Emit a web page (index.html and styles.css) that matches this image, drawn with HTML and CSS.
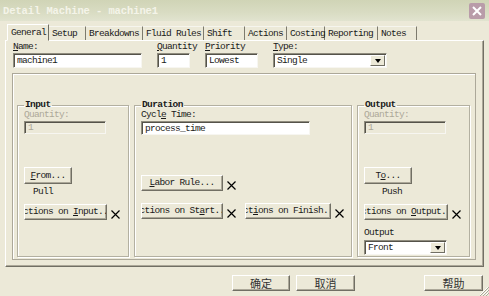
FILE: index.html
```html
<!DOCTYPE html>
<html lang="en">
<head>
    <meta charset="UTF-8">
    <title>Detail Machine - machine1</title>
    <link rel="stylesheet" href="styles.css">
</head>
<body>
    <div class="titlebar">
        <span class="title">Detail Machine - machine1</span>
        <span class="close">
            <svg width="10" height="10" viewBox="0 0 10 10"><path d="M1 1L9 9M9 1L1 9" stroke="#fff" stroke-width="2"/></svg>
        </span>
    </div>

    <ul class="tabs">
        <li class="tab active">General</li>
        <li class="tab">Setup</li>
        <li class="tab">Breakdowns</li>
        <li class="tab">Fluid Rules</li>
        <li class="tab">Shift</li>
        <li class="tab">Actions</li>
        <li class="tab">Costing</li>
        <li class="tab">Reporting</li>
        <li class="tab">Notes</li>
    </ul>

    <div class="panel">
        <div class="fields">
            <div class="field f-name">
                <span class="lbl"><u>N</u>ame:</span>
                <div class="edit">machine1</div>
            </div>
            <div class="field f-qty">
                <span class="lbl"><u>Q</u>uantity</span>
                <div class="edit">1</div>
            </div>
            <div class="field f-pri">
                <span class="lbl"><u>P</u>riority</span>
                <div class="edit">Lowest</div>
            </div>
            <div class="field f-type">
                <span class="lbl"><u>T</u>ype:</span>
                <div class="combo"><span class="val">Single</span><span class="drop"></span></div>
            </div>
        </div>

        <div class="frame">
            <fieldset class="group g-input">
                <legend>Input</legend>
                <span class="lbl grey">Quantity:</span>
                <div class="edit disabled">1</div>
                <div class="btn b-from"><span><u>F</u>rom...</span></div>
                <span class="lbl pull">Pull</span>
                <div class="row r-actions">
                    <div class="btn b-in"><span>Actions on <u>I</u>nput...</span></div>
                    <svg class="x" width="9" height="9" viewBox="0 0 9 9"><path d="M0.5 0.5L8.5 8.5M8.5 0.5L0.5 8.5" stroke="#000" stroke-width="1.2"/></svg>
                </div>
            </fieldset>

            <fieldset class="group g-duration">
                <legend>Duration</legend>
                <span class="lbl">Cycl<u>e</u> Time:</span>
                <div class="edit long">process_time</div>
                <div class="row r-labor">
                    <div class="btn b-labor"><span><u>L</u>abor Rule...</span></div>
                    <svg class="x" width="9" height="9" viewBox="0 0 9 9"><path d="M0.5 0.5L8.5 8.5M8.5 0.5L0.5 8.5" stroke="#000" stroke-width="1.2"/></svg>
                </div>
                <div class="row r-actions">
                    <div class="btn b-start"><span>Actions on St<u>a</u>rt...</span></div>
                    <svg class="x" width="9" height="9" viewBox="0 0 9 9"><path d="M0.5 0.5L8.5 8.5M8.5 0.5L0.5 8.5" stroke="#000" stroke-width="1.2"/></svg>
                    <div class="btn b-finish"><span>Act<u>i</u>ons on Finish...</span></div>
                    <svg class="x" width="9" height="9" viewBox="0 0 9 9"><path d="M0.5 0.5L8.5 8.5M8.5 0.5L0.5 8.5" stroke="#000" stroke-width="1.2"/></svg>
                </div>
            </fieldset>

            <fieldset class="group g-output">
                <legend>Output</legend>
                <span class="lbl grey">Quantity:</span>
                <div class="edit disabled">1</div>
                <div class="btn b-to"><span>T<u>o</u>...</span></div>
                <span class="lbl push">Push</span>
                <div class="row r-actions">
                    <div class="btn b-out"><span>Actions on <u>O</u>utput...</span></div>
                    <svg class="x" width="9" height="9" viewBox="0 0 9 9"><path d="M0.5 0.5L8.5 8.5M8.5 0.5L0.5 8.5" stroke="#000" stroke-width="1.2"/></svg>
                </div>
                <span class="lbl out-lbl">Output</span>
                <div class="combo c-front"><span class="val">Front</span><span class="drop"></span></div>
            </fieldset>
        </div>
    </div>

    <div class="footer">
        <div class="btn cn">确定</div>
        <div class="btn cn b-cancel">取消</div>
        <div class="btn cn">帮助</div>
    </div>

    <svg class="grip" width="10" height="10" viewBox="0 0 10 10">
        <path d="M9 1L1 9M9 4L4 9M9 7L7 9" stroke="#fff" stroke-width="1"/>
        <path d="M10 1L1 10M10 4L4 10M10 7L7 10" stroke="#aca899" stroke-width="1"/>
    </svg>
</body>
</html>
```

FILE: styles.css
```css
*{
    box-sizing: border-box;
}
html, body{
    margin: 0;
}
body{
    width: 489px;
    height: 296px;
    position: relative;
    overflow: hidden;
    background: #ece9d8;
    color: #1a1a1a;
    font-family: "Liberation Mono", "DejaVu Sans Mono", monospace;
    font-size: 9.5px;
    letter-spacing: -0.7px;
    line-height: 10px;
}
u{
    text-decoration: underline;
}

/* title bar */
.titlebar{
    height: 21px;
    display: flex;
    align-items: center;
    justify-content: space-between;
    padding: 0 4px 0 3px;
    background: linear-gradient(#d0d4b6, #d9dcc3 60%, #e1e3cf);
}
.title{
    font-size: 10.5px;
    font-weight: bold;
    letter-spacing: -0.1px;
    color: #f4f4e9;
}
.close{
    width: 16px;
    height: 16px;
    border-radius: 2px;
    background: #b99ca9;
    display: flex;
    align-items: center;
    justify-content: center;
}

/* tabs */
.tabs{
    list-style: none;
    margin: 3px 0 0;
    padding: 0 0 0 7px;
    height: 16px;
    display: flex;
    align-items: flex-end;
    position: relative;
    z-index: 1;
}
.tab{
    height: 14px;
    padding: 2px 0 0 3px;
    border-top: 1px solid #f6f5ee;
    border-right: 1px solid #7d7a6d;
    white-space: nowrap;
}
.tab.active{
    height: 17px;
    margin-bottom: -1px;
    padding-top: 3px;
    background: #ece9d8;
    border: 1px solid;
    border-color: #fff #716f64 #ece9d8 #fff;
}
.tab:nth-child(1){ width: 42px; }
.tab:nth-child(2){ width: 37px; }
.tab:nth-child(3){ width: 57px; }
.tab:nth-child(4){ width: 61px; }
.tab:nth-child(5){ width: 41px; }
.tab:nth-child(6){ width: 42px; }
.tab:nth-child(7){ width: 38px; }
.tab:nth-child(8){ width: 53px; }
.tab:nth-child(9){ width: 39px; }

/* tab body */
.panel{
    margin: 0 5px;
    height: 227px;
    padding: 1px 7px 0 6px;
    border: 1px solid;
    border-color: #fff #716f64 #716f64 #fff;
    box-shadow: inset -1px -1px 0 #aca899;
}
.fields{
    display: flex;
    gap: 15px;
    padding-left: 1px;
}
.field{
    display: flex;
    flex-direction: column;
    gap: 1px;
    white-space: nowrap;
}
.f-name{ width: 129px; }
.f-qty{ width: 33px; }
.f-pri{ width: 53px; }
.f-type{ width: 114px; }

.lbl{
    display: block;
    white-space: nowrap;
}
.grey{
    color: #aca899;
}

.edit, .combo{
    height: 15px;
    background: #fff;
    border: 1px solid;
    border-color: #8f8c7e #f7f6f1 #f7f6f1 #8f8c7e;
    box-shadow: inset 1px 1px 0 #55534a;
    padding: 2px 0 0 3px;
    white-space: nowrap;
    overflow: hidden;
}
.combo{
    display: flex;
    padding: 1px 1px 1px 3px;
}
.combo .val{
    flex: 1;
    padding-top: 1px;
}
.drop{
    width: 15px;
    background: #ece9d8;
    border: 1px solid;
    border-color: #fff #716f64 #716f64 #fff;
    display: flex;
    align-items: center;
    justify-content: center;
}
.drop::after{
    content: "";
    border-top: 4px solid #000;
    border-left: 3.5px solid transparent;
    border-right: 3.5px solid transparent;
}

/* inner frame and group boxes */
.frame{
    margin-top: 5px;
    height: 187px;
    display: flex;
    gap: 5px;
    padding: 26px 5px 2px 4px;
    border: 1px solid #aca899;
    box-shadow: inset 1px 1px 0 #fff;
}
.group{
    margin: 0;
    padding: 0 6px;
    min-width: 0;
    border: 1px solid #b3b0a1;
    box-shadow: inset 1px 1px 0 #fff, 1px 1px 0 #fff;
}
.group legend{
    padding: 0 1px;
    font-weight: bold;
    letter-spacing: -0.6px;
}
.g-input{ width: 112px; }
.g-duration{ width: 218px; }
.g-output{ width: 113px; }

.group .edit{
    margin-top: 1px;
    width: 82px;
    height: 13px;
    padding-top: 1px;
}
.group .edit.long{
    width: 169px;
    height: 14px;
    padding-top: 2px;
}
.edit.disabled{
    background: #ece9d8;
    color: #aca899;
}

/* buttons */
.btn{
    height: 16px;
    display: flex;
    justify-content: center;
    align-items: center;
    overflow: hidden;
    white-space: nowrap;
    background: #ece9d8;
    border: 1px solid;
    border-color: #fff #716f64 #716f64 #fff;
    box-shadow: inset -1px -1px 0 #aca899;
}
.btn span{
    flex: none;
}
.b-from, .b-to{
    width: 48px;
    height: 17px;
    margin-top: 33px;
}
.b-in{ width: 83px; }
.b-labor, .b-start{ width: 82px; }
.b-finish{ width: 86px; margin-left: 5px; }
.b-out{ width: 84px; }

.pull{
    margin: 3px 0 0 9px;
}
.push{
    margin: 3px 0 0 18px;
}
.row{
    display: flex;
    align-items: flex-end;
    gap: 4px;
}
.row .x{
    flex: none;
    margin-bottom: 1px;
}
.r-actions{
    margin-top: 7px;
}
.g-duration .r-labor{
    margin-top: 40px;
}
.g-duration .r-actions{
    margin-top: 12px;
}
.out-lbl{
    margin-top: 8px;
}
.c-front{
    margin-top: 2px;
    width: 83px;
}

/* dialog buttons */
.footer{
    display: flex;
    justify-content: flex-end;
    gap: 6px;
    margin-top: 8px;
    padding-right: 6px;
}
.btn.cn{
    width: 59px;
    height: 16px;
    font-family: "Noto Sans CJK SC", "Liberation Sans", sans-serif;
    font-size: 11px;
    letter-spacing: 0;
    color: #333;
}
.footer .btn:first-child{
    width: 58px;
}
.b-cancel{
    margin-right: 63px;
}
.grip{
    position: absolute;
    right: 0;
    bottom: 0;
}
```
